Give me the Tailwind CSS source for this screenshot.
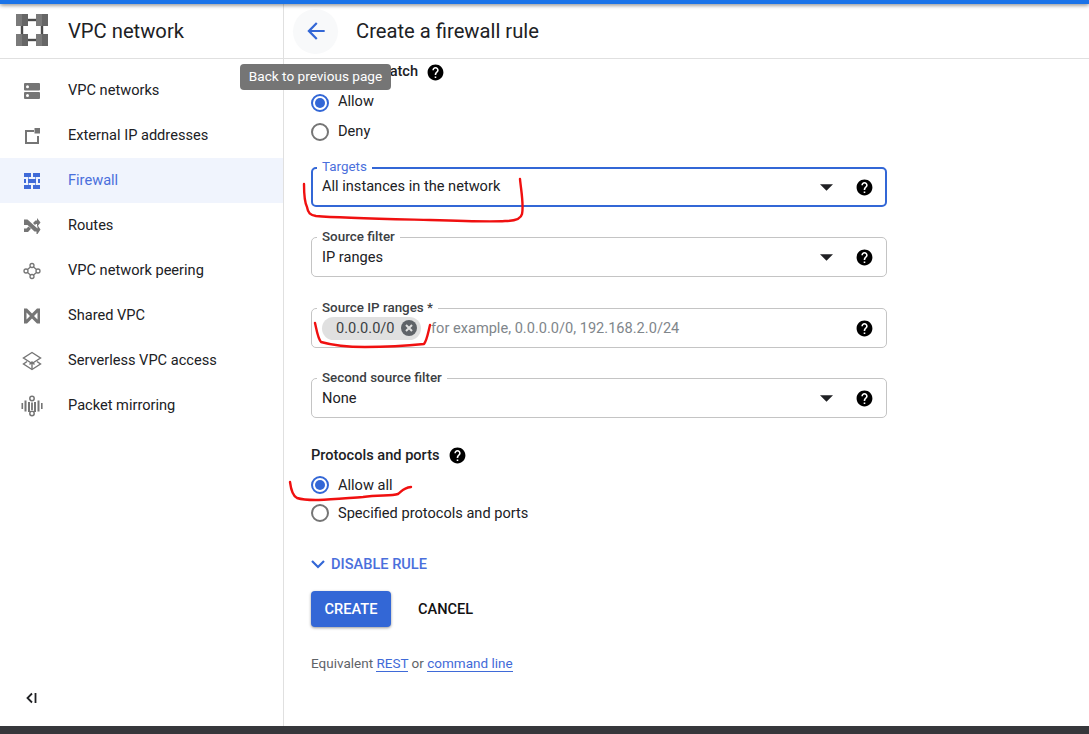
<!DOCTYPE html>
<html lang="en">
<head>
    <meta charset="UTF-8">
    <meta name="viewport" content="width=device-width, initial-scale=1.0">
    <title>Create a firewall rule</title>
    <script src="https://cdn.jsdelivr.net/npm/@tailwindcss/browser@4"></script>
</head>
<body class="font-['Roboto',sans-serif] text-[#202124] bg-white">
<div class="relative w-[1089px] h-[734px] overflow-hidden flex flex-col">
    <div class="h-[4px] bg-[#1a73e8] shadow-[0_1px_4px_rgba(0,0,0,0.55)] relative z-10"></div>

    <div class="flex flex-1 min-h-0">
        <!-- sidebar -->
        <aside class="w-[284px] border-r border-[#e0e0e0] flex flex-col">
            <div class="h-[55px] border-b border-[#e0e0e0] flex items-center pl-4 gap-[20px]">
                <svg width="32" height="32" viewBox="0 0 32 32" class="mt-[-2px]">
                    <rect x="6" y="6" width="20" height="20" fill="none" stroke="#4a4a4a" stroke-width="2.400"/>
                    <path d="M0 0h6v12H0zM20 0h6v12h-6zM0 20h6v12H0zM20 20h6v12h-6z" fill="#7a7a7a"/>
                    <path d="M6 0h6v12H6zM26 0h6v12h-6zM6 20h6v12H6zM26 20h6v12h-6z" fill="#666666"/>
                </svg>
                <span class="text-[20.2px]">VPC network</span>
            </div>
            <nav class="pt-[9px] flex-1 text-[14.6px]">
                <a class="h-[45px] flex items-center pl-5 gap-6">
                    <svg width="24" height="24" viewBox="0 0 24 24" fill="#757575">
                        <path fill-rule="evenodd" d="M5 4h14a1 1 0 0 1 1 1v5.500a1 1 0 0 1-1 1H5a1 1 0 0 1-1-1V5a1 1 0 0 1 1-1zm2.500 2.200a1.500 1.500 0 1 0 0 3 1.500 1.500 0 0 0 0-3zM5 13h14a1 1 0 0 1 1 1v5a1 1 0 0 1-1 1H5a1 1 0 0 1-1-1v-5a1 1 0 0 1 1-1zm2.500 2a1.500 1.500 0 1 0 0 3 1.500 1.500 0 0 0 0-3z"/>
                    </svg>
                    <span>VPC networks</span>
                </a>
                <a class="h-[45px] flex items-center pl-5 gap-6">
                    <svg width="24" height="24" viewBox="0 0 24 24" fill="#757575">
                        <path d="M5 6h9v2H7v10h10v-6h2v8H5z"/>
                        <path d="M14.500 4H20v5.500h-5.500z"/>
                    </svg>
                    <span>External IP addresses</span>
                </a>
                <a class="h-[45px] flex items-center pl-5 gap-6 bg-[#f0f4fd] text-[#4a6fdc]">
                    <svg width="24" height="24" viewBox="0 0 24 24" fill="#3f6ad8">
                        <path d="M4 4h7v4H4zM13 4h7v4h-7zM4 10h2v4H4zM8 10h8v4H8zM18 10h2v4h-2zM4 16h7v4H4zM13 16h7v4h-7z"/>
                        <path d="M8 8h1v2H8zM15 8h1v2h-1zM8 14h1v2H8zM15 14h1v2h-1z" opacity="0.6"/>
                    </svg>
                    <span>Firewall</span>
                </a>
                <a class="h-[45px] flex items-center pl-5 gap-6">
                    <svg width="24" height="24" viewBox="0 0 24 24" fill="#757575">
                        <path d="M4 9.500V5.500h3.500l10 9V11l3 4.500-3 4.500h-1v-2.500h-2l-7-6.500H4z"/>
                        <path d="M4 14.500h2.500l2-2 2.500 2.300-3 3.200H4zM13 9l2.500-2.500H17V4l3.500 4.500L17 13v-3h-1l-1 1z"/>
                    </svg>
                    <span>Routes</span>
                </a>
                <a class="h-[45px] flex items-center pl-5 gap-6">
                    <svg width="24" height="24" viewBox="0 0 24 24" fill="none" stroke="#757575" stroke-width="1.300">
                        <circle cx="12" cy="6.500" r="2"/>
                        <circle cx="12" cy="17.500" r="2"/>
                        <circle cx="6" cy="12" r="2"/>
                        <circle cx="18" cy="12" r="2"/>
                        <path d="M10.500 8L7.500 10.500M13.500 8l3 2.500M7.500 13.500l3 2.500M16.500 13.500l-3 2.500"/>
                    </svg>
                    <span>VPC network peering</span>
                </a>
                <a class="h-[45px] flex items-center pl-5 gap-6">
                    <svg width="24" height="24" viewBox="0 0 24 24" fill="#757575">
                        <path fill-rule="evenodd" d="M4 4.500h3l5 5 5-5h3v15h-3l-5-5-5 5H4zM6.500 8.500v7l3.500-3.500zM17.500 8.500L14 12l3.500 3.500z"/>
                    </svg>
                    <span>Shared VPC</span>
                </a>
                <a class="h-[45px] flex items-center pl-5 gap-6">
                    <svg width="24" height="24" viewBox="0 0 24 24" fill="none" stroke="#757575" stroke-width="1.400">
                        <path d="M12 3.500l8.500 5.500-8.500 5.500L3.500 9z"/>
                        <path d="M7 12.500L3.500 15l8.500 5.500 8.500-5.500-3.500-2.500"/>
                        <path d="M12 20v-7M9.500 15.500l2.500-2.500 2.500 2.500"/>
                    </svg>
                    <span>Serverless VPC access</span>
                </a>
                <a class="h-[45px] flex items-center pl-5 gap-6">
                    <svg width="24" height="24" viewBox="0 0 24 24" fill="#757575">
                        <rect x="1.500" y="9" width="1.600" height="6"/>
                        <rect x="4.500" y="6.500" width="2" height="11"/>
                        <rect x="8" y="8" width="2" height="10"/>
                        <rect x="14" y="8" width="2" height="10"/>
                        <rect x="17.500" y="6.500" width="2" height="11"/>
                        <rect x="21" y="9" width="1.600" height="6"/>
                        <circle cx="12" cy="4.500" r="2.200" fill="none" stroke="#757575" stroke-width="1.500"/>
                        <circle cx="12" cy="19.500" r="2.200" fill="none" stroke="#757575" stroke-width="1.500"/>
                        <rect x="11.100" y="8.500" width="1.800" height="7.500"/>
                    </svg>
                    <span>Packet mirroring</span>
                </a>
            </nav>
            <div class="h-[56px] pl-[26px] flex items-center">
                <svg width="11" height="12" viewBox="0 0 11 12" fill="none" stroke="#202124" stroke-width="1.800">
                    <path d="M6 1.500L1.500 6 6 10.500"/>
                    <path d="M9.500 1v10"/>
                </svg>
            </div>
        </aside>

        <!-- main panel -->
        <main class="flex-1 flex flex-col min-w-0">
            <header class="h-[55px] border-b border-[#e0e0e0] flex items-center pl-[9px] gap-[18px]">
                <button class="w-[45px] h-[45px] rounded-full bg-[#f8f9fa] flex items-center justify-center">
                    <svg width="26" height="26" viewBox="0 0 24 24" fill="#3367d6">
                        <path d="M20 11H7.830l5.590-5.590L12 4l-8 8 8 8 1.410-1.410L7.830 13H20z"/>
                    </svg>
                </button>
                <h1 class="text-[20.2px]">Create a firewall rule</h1>
            </header>

            <div class="pl-[27px] w-[603px] text-[14.6px]">
                <div class="h-[26px] flex items-center gap-2 font-medium">
                    <span>Action on match</span>
                    <svg width="19" height="19" viewBox="0 0 24 24"><path d="M12 2C6.480 2 2 6.480 2 12s4.480 10 10 10 10-4.480 10-10S17.520 2 12 2zm1 17h-2v-2h2v2zm2.070-7.750l-.9.920C13.450 12.900 13 13.500 13 15h-2v-.5c0-1.100.45-2.100 1.170-2.830l1.240-1.260c.37-.36.59-.86.59-1.410 0-1.100-.9-2-2-2s-2 .9-2 2H8c0-2.210 1.790-4 4-4s4 1.790 4 4c0 .88-.36 1.680-.93 2.250z"/></svg>
                </div>
                <div class="mt-[3px] h-[29px] flex items-center gap-[9px]">
                    <span class="w-[18px] h-[18px] rounded-full border-2 border-[#3367d6] flex items-center justify-center"><span class="w-[10px] h-[10px] rounded-full bg-[#3367d6]"></span></span>
                    <span class="mt-[-1px]">Allow</span>
                </div>
                <div class="h-[29px] flex items-center gap-[9px]">
                    <span class="w-[18px] h-[18px] rounded-full border-2 border-[#757575]"></span>
                    <span>Deny</span>
                </div>

                <div class="relative mt-[21px] h-[40px] border-2 border-[#3367d6] rounded-[5px] flex items-center pl-[9px] pr-[11px]">
                    <label class="absolute left-[4px] top-[-9px] px-[5px] bg-white text-[13.4px] leading-[14px] text-[#4a6fdc]">Targets</label>
                    <span class="flex-1">All instances in the network</span>
                    <svg width="13" height="7" viewBox="0 0 14 7" class="mr-[22px]"><path d="M0 0h14L7 7z" fill="#202124"/></svg>
                    <svg width="19" height="19" viewBox="0 0 24 24"><path d="M12 2C6.480 2 2 6.480 2 12s4.480 10 10 10 10-4.480 10-10S17.520 2 12 2zm1 17h-2v-2h2v2zm2.070-7.750l-.9.920C13.450 12.900 13 13.500 13 15h-2v-.5c0-1.100.45-2.100 1.170-2.830l1.240-1.260c.37-.36.59-.86.59-1.410 0-1.100-.9-2-2-2s-2 .9-2 2H8c0-2.210 1.790-4 4-4s4 1.790 4 4c0 .88-.36 1.680-.93 2.250z"/></svg>
                </div>

                <div class="relative mt-[30px] h-[40px] border border-[#c4c4c4] rounded-[5px] flex items-center pl-[10px] pr-[12px]">
                    <label class="absolute left-[5px] top-[-8px] px-[5px] bg-white text-[13.4px] leading-[14px] font-medium text-[#3c4043]">Source filter</label>
                    <span class="flex-1 pt-[2px]">IP ranges</span>
                    <svg width="13" height="7" viewBox="0 0 14 7" class="mr-[22px]"><path d="M0 0h14L7 7z" fill="#202124"/></svg>
                    <svg width="19" height="19" viewBox="0 0 24 24"><path d="M12 2C6.480 2 2 6.480 2 12s4.480 10 10 10 10-4.480 10-10S17.520 2 12 2zm1 17h-2v-2h2v2zm2.070-7.750l-.9.920C13.450 12.900 13 13.500 13 15h-2v-.5c0-1.100.45-2.100 1.170-2.830l1.240-1.260c.37-.36.59-.86.59-1.410 0-1.100-.9-2-2-2s-2 .9-2 2H8c0-2.210 1.790-4 4-4s4 1.790 4 4c0 .88-.36 1.680-.93 2.250z"/></svg>
                </div>

                <div class="relative mt-[31px] h-[40px] border border-[#c4c4c4] rounded-[5px] flex items-center pl-[10px] pr-[12px]">
                    <label class="absolute left-[5px] top-[-8px] px-[5px] bg-white text-[13.4px] leading-[14px] font-medium text-[#3c4043]">Source IP ranges *</label>
                    <span class="h-[23px] w-[99px] rounded-full bg-[#e0e0e0] flex items-center pl-[14px] gap-[6px] text-[#3c4043]">
                        <span class="pt-[2px]">0.0.0.0/0</span>
                        <svg width="16" height="16" viewBox="0 0 16 16">
                            <circle cx="8" cy="8" r="8" fill="#5f6368"/>
                            <path d="M5 5l6 6M11 5l-6 6" stroke="#e0e0e0" stroke-width="2"/>
                        </svg>
                    </span>
                    <span class="flex-1 ml-[10px] pt-[2px] text-[#80868b]">for example, 0.0.0.0/0, 192.168.2.0/24</span>
                    <svg width="19" height="19" viewBox="0 0 24 24"><path d="M12 2C6.480 2 2 6.480 2 12s4.480 10 10 10 10-4.480 10-10S17.520 2 12 2zm1 17h-2v-2h2v2zm2.070-7.750l-.9.920C13.450 12.900 13 13.500 13 15h-2v-.5c0-1.100.45-2.100 1.170-2.830l1.240-1.260c.37-.36.59-.86.59-1.410 0-1.100-.9-2-2-2s-2 .9-2 2H8c0-2.210 1.790-4 4-4s4 1.790 4 4c0 .88-.36 1.680-.93 2.250z"/></svg>
                </div>

                <div class="relative mt-[30px] h-[40px] border border-[#c4c4c4] rounded-[5px] flex items-center pl-[10px] pr-[12px]">
                    <label class="absolute left-[5px] top-[-8px] px-[5px] bg-white text-[13.4px] leading-[14px] font-medium text-[#3c4043]">Second source filter</label>
                    <span class="flex-1 pt-[2px]">None</span>
                    <svg width="13" height="7" viewBox="0 0 14 7" class="mr-[22px]"><path d="M0 0h14L7 7z" fill="#202124"/></svg>
                    <svg width="19" height="19" viewBox="0 0 24 24"><path d="M12 2C6.480 2 2 6.480 2 12s4.480 10 10 10 10-4.480 10-10S17.520 2 12 2zm1 17h-2v-2h2v2zm2.070-7.750l-.9.920C13.450 12.900 13 13.500 13 15h-2v-.5c0-1.100.45-2.100 1.170-2.830l1.240-1.260c.37-.36.59-.86.59-1.410 0-1.100-.9-2-2-2s-2 .9-2 2H8c0-2.210 1.790-4 4-4s4 1.790 4 4c0 .88-.36 1.680-.93 2.250z"/></svg>
                </div>

                <div class="mt-[28px] h-[20px] flex items-center gap-2 font-medium">
                    <span>Protocols and ports</span>
                    <svg width="19" height="19" viewBox="0 0 24 24" class="mt-[-1px]"><path d="M12 2C6.480 2 2 6.480 2 12s4.480 10 10 10 10-4.480 10-10S17.520 2 12 2zm1 17h-2v-2h2v2zm2.070-7.750l-.9.920C13.450 12.900 13 13.500 13 15h-2v-.5c0-1.100.45-2.100 1.170-2.830l1.240-1.260c.37-.36.59-.86.59-1.410 0-1.100-.9-2-2-2s-2 .9-2 2H8c0-2.210 1.790-4 4-4s4 1.790 4 4c0 .88-.36 1.680-.93 2.250z"/></svg>
                </div>
                <div class="mt-[5px] h-[28px] flex items-center gap-[9px]">
                    <span class="w-[18px] h-[18px] rounded-full border-2 border-[#3367d6] flex items-center justify-center"><span class="w-[10px] h-[10px] rounded-full bg-[#3367d6]"></span></span>
                    <span class="pt-[2px]">Allow all</span>
                </div>
                <div class="h-[28px] flex items-center gap-[9px]">
                    <span class="w-[18px] h-[18px] rounded-full border-2 border-[#757575]"></span>
                    <span class="pt-[2px]">Specified protocols and ports</span>
                </div>

                <button class="mt-[27px] h-[20px] flex items-center gap-[6px] font-medium text-[#4a6fdc]">
                    <svg width="14" height="9" viewBox="0 0 14 9" fill="none" stroke="#3367d6" stroke-width="2.200"><path d="M1 1l6 6 6-6"/></svg>
                    <span class="pt-[2px]">DISABLE RULE</span>
                </button>

                <div class="mt-[17px] flex items-center gap-[27px] font-medium">
                    <button class="w-[80px] h-[36px] pt-[1px] rounded-[4px] bg-[#3367d6] text-white shadow-[0_1px_3px_rgba(0,0,0,0.4)]">CREATE</button>
                    <button class="text-[#111] pt-[1px]">CANCEL</button>
                </div>

                <p class="mt-[26px] h-[20px] leading-[20px] text-[#5f6368] text-[13.500px]">Equivalent <a class="text-[#3f6ad8] border-b border-[#3f6ad8]">REST</a> or <a class="text-[#3f6ad8] border-b border-[#3f6ad8]">command line</a></p>
            </div>
        </main>
    </div>

    <div class="h-[8px] bg-[#36373b]"></div>

    <!-- tooltip over the page -->
    <div class="absolute left-[240px] top-[64px] w-[151px] h-[26px] pb-[2px] rounded-[4px] bg-[#757575] text-white text-[13.6px] flex items-center justify-center z-20">Back to previous page</div>

    <!-- hand-drawn red marks on the screenshot -->
    <svg class="absolute left-0 top-0 z-30 pointer-events-none" width="1089" height="734" fill="none" stroke="#f01010" stroke-width="2.400" stroke-linecap="round" stroke-linejoin="round">
        <path d="M304 184C304 195 305 203 307 207C308 213 310 215 316 216C340 218 390 219 430 220C460 221 490 222 505 221C515 221 521 219 522 214C524 205 521 190 520 179"/>
        <path d="M315 323C317 332 318 339 321 342C335 346 350 347 365 347C385 347 405 346 424 344C427 340 428 333 430 325"/>
        <path d="M290 482C291 490 293 496 297 498C310 502 335 499 363 497C380 495 392 496 398 494C402 491 403 488 411 487"/>
    </svg>
</div>
</body>
</html>
